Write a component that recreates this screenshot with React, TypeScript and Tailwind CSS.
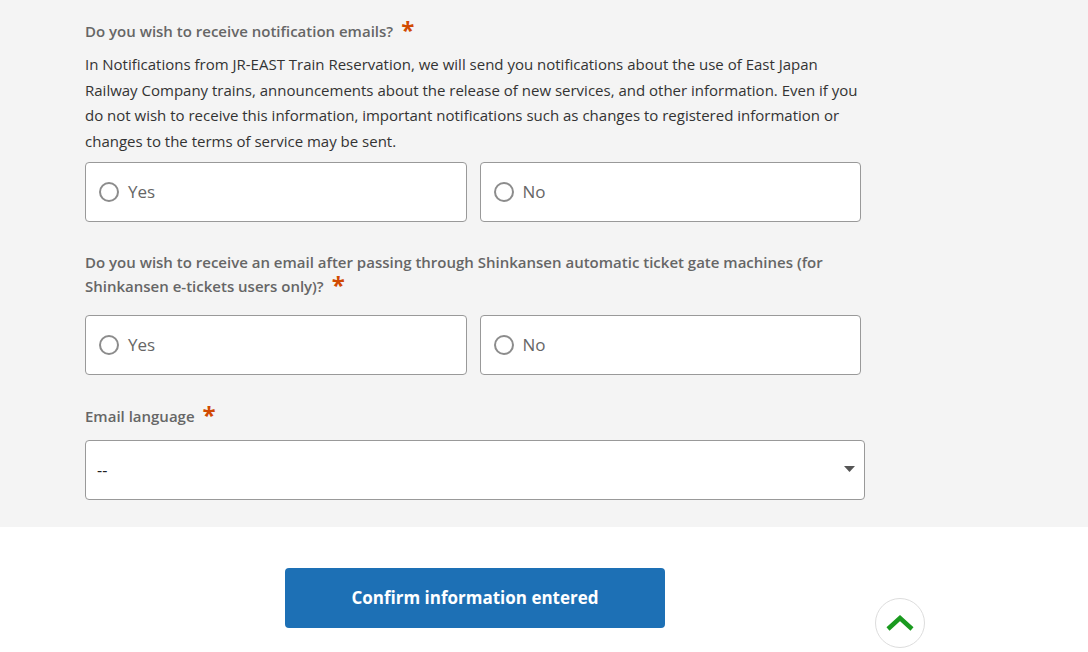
import { useState } from 'react'

const font = { fontFamily: '"Open Sans", "Noto Sans", sans-serif' }

function Asterisk() {
  return <span className="ml-[8px] inline-block align-[-2px] text-[24px] leading-[16px] font-bold text-[#d14a02]">*</span>
}

function RadioBox({ label, checked, onClick }: { label: string; checked: boolean; onClick: () => void }) {
  return (
    <button
      type="button"
      onClick={onClick}
      className="flex h-[60px] items-center gap-[9px] rounded-[4px] border border-[#999] bg-white pl-[13px] text-left"
    >
      <span className="flex h-[20px] w-[20px] items-center justify-center rounded-full border-2 border-[#8c8c8c] bg-white">
        {checked && <span className="h-[10px] w-[10px] rounded-full bg-[#1d70b5]" />}
      </span>
      <span className="text-[17px] text-[#666]">{label}</span>
    </button>
  )
}

function RadioGroup() {
  const [value, setValue] = useState<string | null>(null)
  return (
    <div className="grid w-[776px] grid-cols-2 gap-[13px]">
      <RadioBox label="Yes" checked={value === 'yes'} onClick={() => setValue('yes')} />
      <RadioBox label="No" checked={value === 'no'} onClick={() => setValue('no')} />
    </div>
  )
}

export default function App() {
  return (
    <div className="relative min-h-[652px] bg-white" style={font}>
      <div className="bg-[#f4f4f4] px-[85px] pt-[19px] pb-[27px]">
        <div className="text-[15px] leading-[24px] font-semibold text-[#666]">
          Do you wish to receive notification emails?
          <Asterisk />
        </div>
        <p className="mt-[9px] w-[780px] text-[15px] leading-[25.7px] text-[#333]">
          In Notifications from JR-EAST Train Reservation, we will send you notifications about the use of East Japan
          Railway Company trains, announcements about the release of new services, and other information. Even if you
          do not wish to receive this information, important notifications such as changes to registered information or
          changes to the terms of service may be sent.
        </p>
        <div className="mt-[7px]">
          <RadioGroup />
        </div>

        <div className="mt-[28px] w-[770px] text-[15px] leading-[24px] font-semibold text-[#666]">
          Do you wish to receive an email after passing through Shinkansen automatic ticket gate machines (for
          Shinkansen e-tickets users only)?
          <Asterisk />
        </div>
        <div className="mt-[17px]">
          <RadioGroup />
        </div>

        <div className="mt-[29px] text-[15px] leading-[24px] font-semibold text-[#666]">
          Email language
          <Asterisk />
        </div>
        <div className="relative mt-[12px] w-[780px]">
          <select className="h-[60px] w-full appearance-none rounded-[4px] border border-[#999] bg-white pl-[11px] text-[16px] text-[#222] outline-none">
            <option>--</option>
            <option>English</option>
            <option>日本語</option>
          </select>
          <svg className="pointer-events-none absolute top-[26px] right-[10px]" width="11" height="6" viewBox="0 0 11 6">
            <path d="M0 0h11L5.5 6z" fill="#555" />
          </svg>
        </div>
      </div>

      <div className="flex w-[950px] justify-center pt-[41px]">
        <button
          type="button"
          className="h-[60px] w-[380px] rounded-[4px] bg-[#1d70b5] text-[17px] font-bold text-white"
        >
          Confirm information entered
        </button>
      </div>

      <button
        type="button"
        aria-label="Back to top"
        className="absolute top-[598px] left-[875px] flex h-[50px] w-[50px] items-center justify-center rounded-full border border-[#ddd] bg-white"
      >
        <svg width="30" height="18" viewBox="0 0 30 18">
          <path d="M3 15L15 4l12 11" fill="none" stroke="#1a9a1f" strokeWidth="4.5" />
        </svg>
      </button>
    </div>
  )
}
